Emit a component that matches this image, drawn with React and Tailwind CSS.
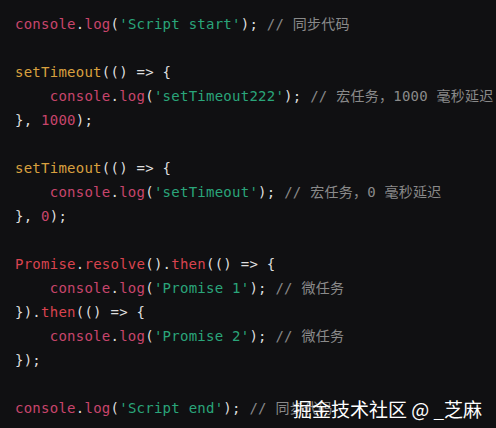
const mono = { fontFamily: '"DejaVu Sans Mono", "Noto Sans CJK SC", monospace' };

const C = ({ children }) => <span className="text-[#c8456c]">{children}</span>;
const R = ({ children }) => <span className="text-[#d9434f]">{children}</span>;
const Y = ({ children }) => <span className="text-[#d9a03f]">{children}</span>;
const S = ({ children }) => <span className="text-[#2aa57a]">{children}</span>;
const G = ({ children }) => <span className="text-[#8a8a8a]">{children}</span>;

const Log = ({ str, note }) => (
  <>
    <C>console</C>.<C>log</C>(<S>'{str}'</S>); <G>// {note}</G>
  </>
);

export default function App() {
  const lines = [
    <Log str="Script start" note="同步代码" />,
    '',
    <><Y>setTimeout</Y>(() =&gt; {'{'}</>,
    <>{'    '}<Log str="setTimeout222" note="宏任务，1000 毫秒延迟" /></>,
    <>{'}'}, <C>1000</C>);</>,
    '',
    <><Y>setTimeout</Y>(() =&gt; {'{'}</>,
    <>{'    '}<Log str="setTimeout" note="宏任务，0 毫秒延迟" /></>,
    <>{'}'}, <C>0</C>);</>,
    '',
    <><R>Promise</R>.<R>resolve</R>().<R>then</R>(() =&gt; {'{'}</>,
    <>{'    '}<Log str="Promise 1" note="微任务" /></>,
    <>{'}'}).<R>then</R>(() =&gt; {'{'}</>,
    <>{'    '}<Log str="Promise 2" note="微任务" /></>,
    <>{'}'});</>,
    '',
    <Log str="Script end" note="同步代码" />,
  ];

  return (
    <div className="relative w-[496px] h-[428px] overflow-hidden bg-[#101012]">
      <pre
        className="pt-3 pl-[15px] text-[14px] tracking-[0.25px] leading-6 text-[#dedede] whitespace-pre"
        style={mono}
      >
        {lines.map((l, i) => (
          <div key={i} className="h-6">{l}</div>
        ))}
      </pre>
      <div
        className="absolute right-[14px] bottom-[7px] text-[19px] leading-6 text-white"
        style={{ fontFamily: '"Noto Sans CJK SC", "Noto Sans", sans-serif' }}
      >
        掘金技术社区 @ _芝麻
      </div>
    </div>
  );
}
